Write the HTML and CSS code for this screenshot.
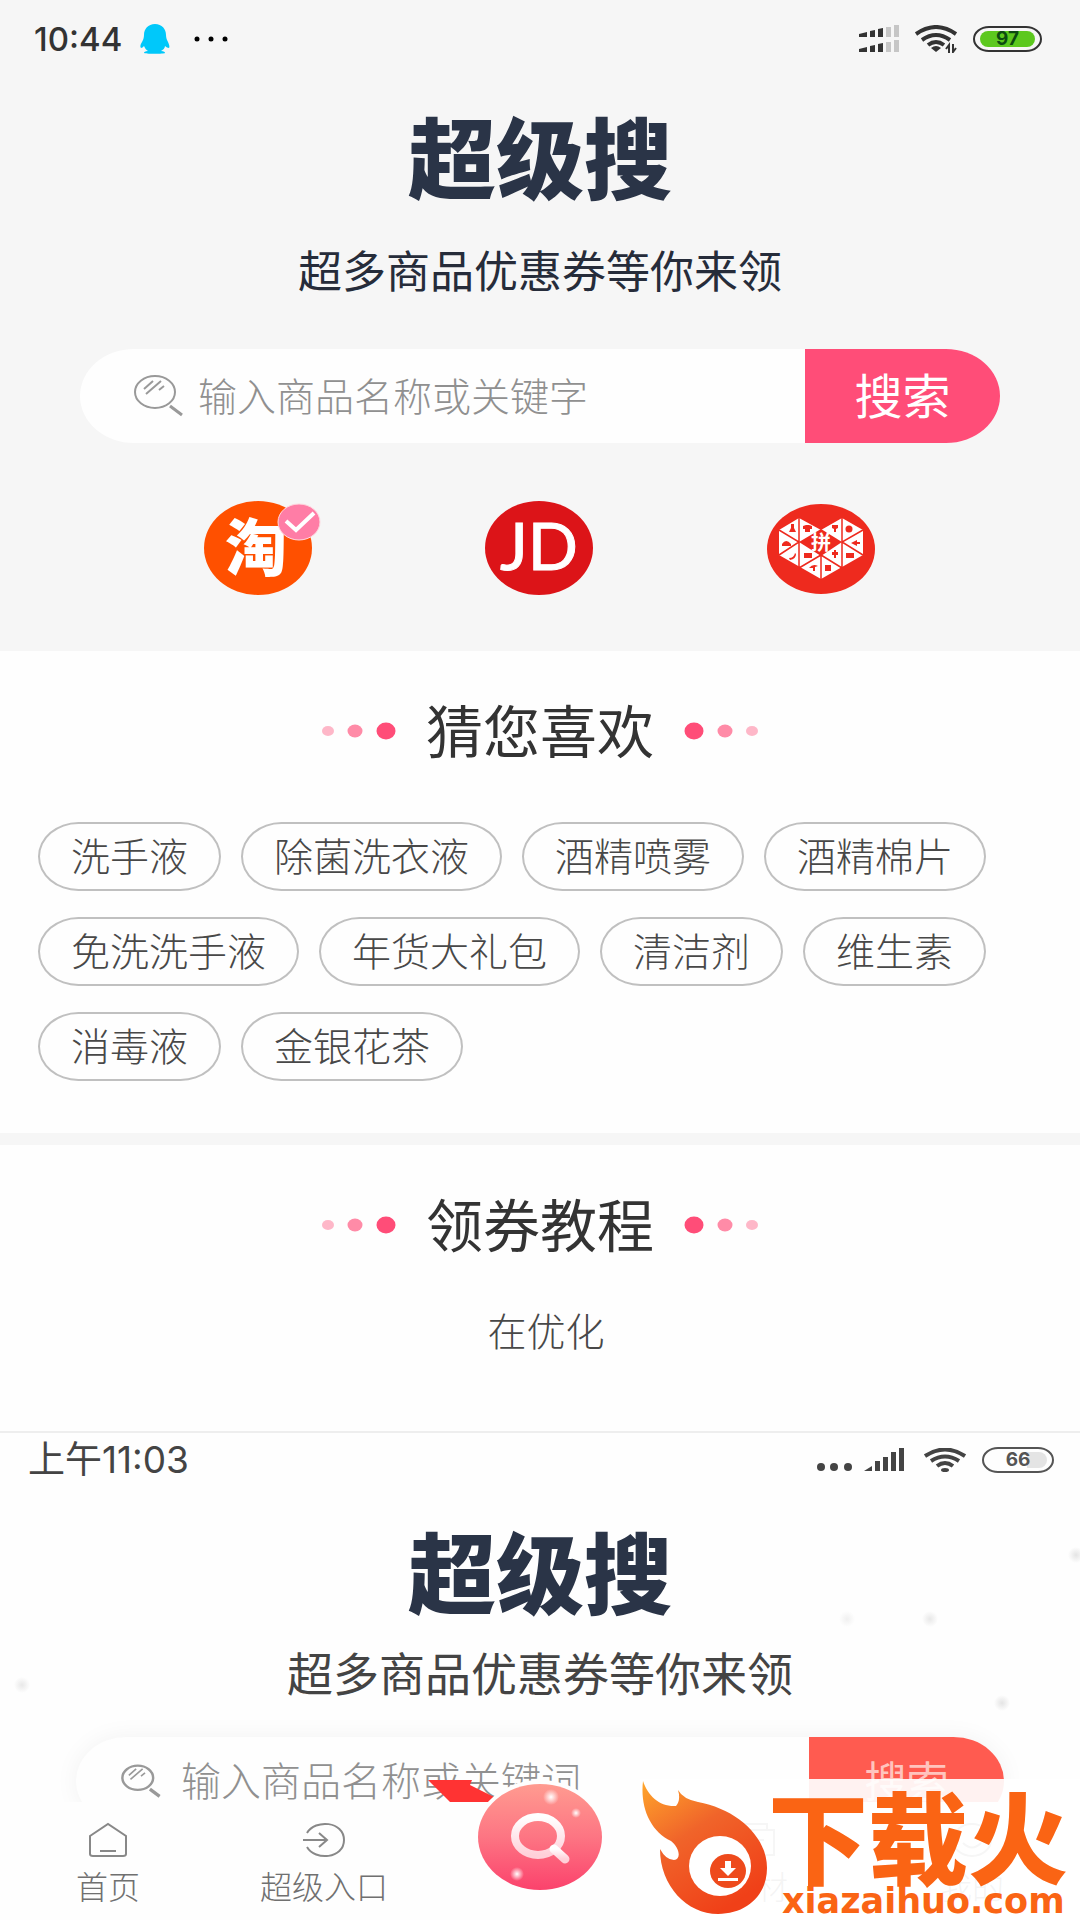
FILE: index.html
```html
<!DOCTYPE html>
<html lang="zh-CN">
<head>
  <meta charset="UTF-8">
  <meta name="viewport" content="width=device-width, initial-scale=1.0">
  <title>超级搜</title>
  <link rel="stylesheet" href="styles.css">
</head>
<body>
  <div class="app">
    <header class="top">
      <div class="status-bar">
        <span class="status-time">10:44</span>
        <svg class="icon-qq" width="30" height="30" viewBox="0 0 30 30" fill="#00c8fa">
          <path d="M15 0C8 0 4 5 4 11c0 3-1 5-2 7-2 3-2 5-1 6 1 0 2-1 3-2 1 2 2 4 4 5-3 0-4 1-4 2 0 1 21 1 21 0s-1-2-4-2c2-1 4-3 4-5 1 1 3 2 4 2 1-1 0-4-1-6-1-2-2-4-2-7C26 5 22 0 15 0z"/>
        </svg>
        <svg class="icon-more" width="34" height="6" viewBox="0 0 34 6">
          <circle cx="3" cy="3" r="2.5"/><circle cx="17" cy="3" r="2.5"/><circle cx="31" cy="3" r="2.5"/>
        </svg>
        <div class="status-right">
          <svg width="40" height="28" viewBox="0 0 40 28" fill="#333">
            <path d="M0 9l8-2v5H0zM11 6l5-1v7h-5zM19 4l5-1v9h-5zM0 24l8-2v5H0zM11 21l5-1v7h-5zM19 19l5-1v9h-5z"/>
            <path fill="#c6c6c6" d="M27 2h5v10h-5zM35 0h5v12h-5zM27 17h5v10h-5zM35 15h5v12h-5z"/>
          </svg>
          <svg width="42" height="28" viewBox="0 0 42 28" fill="none" stroke="#333" stroke-width="4">
            <path d="M1 9Q21-5 41 9M7 15q14-10 28 0M13 20q8-6 16 0"/>
            <path d="M21 27l-5-4q5-4 10 0z" fill="#333" stroke="none"/>
            <path d="M34 28v-8l-3 4M38 19v8l3-4" stroke-width="2"/>
          </svg>
          <span class="battery battery-green"><span class="battery-level">97</span></span>
        </div>
      </div>

      <h1 class="brand">超级搜</h1>
      <p class="slogan">超多商品优惠券等你来领</p>

      <form class="search">
        <label class="search-icon" for="keyword" aria-label="关键字">
          <svg width="50" height="42" viewBox="0 0 50 42" fill="none" stroke="#999" stroke-width="2">
            <ellipse cx="21" cy="17" rx="20" ry="16"/>
            <path d="M10 14l9-8M12 19l15-13M25 15l5-4"/>
            <path d="M36 31l12 9" stroke-width="3"/>
          </svg>
        </label>
        <input class="search-input" id="keyword" type="text" placeholder="输入商品名称或关键字">
        <button class="search-button" type="button">搜索</button>
      </form>

      <div class="sources">
        <button class="source" type="button" aria-label="淘宝">
          <svg width="109" height="94" viewBox="0 0 109 94">
            <ellipse cx="54" cy="47" rx="54" ry="47" fill="#ff5000"/>
            <text x="52" y="70" font-size="62" font-weight="900" fill="#fff" text-anchor="middle">淘</text>
          </svg>
          <svg class="source-check" width="44" height="38" viewBox="0 0 44 38">
            <ellipse cx="22" cy="19" rx="21" ry="18" fill="#ff7da6" stroke="#ffd9e0"/>
            <path d="M9 18l10 9 18-17" fill="none" stroke="#fff" stroke-width="4"/>
          </svg>
        </button>
        <button class="source" type="button" aria-label="京东">
          <svg width="109" height="94" viewBox="0 0 109 94">
            <ellipse cx="54" cy="47" rx="54" ry="47" fill="#dc1418"/>
            <text class="jd" x="54" y="69" font-size="66" fill="#fff" stroke="#fff" text-anchor="middle">JD</text>
          </svg>
        </button>
        <button class="source" type="button" aria-label="拼多多">
          <svg width="109" height="94" viewBox="0 0 109 94">
            <ellipse cx="54" cy="48" rx="54" ry="45" fill="#ee2a1e"/>
            <path fill="#fff" d="M12 29l20-12 22 12 21-12 21 12v25L54 78 12 54z"/>
            <g fill="none" stroke="#ee2a1e" stroke-width="1.5">
              <path d="M32 17v50M75 17v50M54 54v24M12 29l20 12-20 13M96 29L75 41l21 13M32 67l22-13 21 13"/>
            </g>
            <path fill="#ee2a1e" d="M32 41l22-13 21 13-21 14z"/>
            <g fill="#ee2a1e">
              <path d="M24 23h3v4l2 4h-7l2-4zM36 25l3-1h3l3 1v3h-2v3h-5v-3h-2zM65 24h6v3l-2 1v3h-2v-3l-2-1zM15 43q4-6 9 0v2h-9zM22 57q5 0 6-5l1 1q0 5-6 6zM37 52h8v5h-8zM65 51h2v-2h2v2h2v3h-2v3h-2v-3h-2zM79 52h8v5h-8zM84 42l6-3v2h3v2h-3v2zM42 67q4-5 9-2l-3 1v4h-2v-3zM58 64h6v6h-6z"/>
              <circle cx="82" cy="28" r="3.5"/>
            </g>
            <text x="54" y="49" font-size="20" font-weight="700" fill="#fff" text-anchor="middle">拼</text>
          </svg>
        </button>
      </div>
    </header>

    <section class="block">
      <div class="block-title">
        <svg width="74" height="20" viewBox="0 0 74 20" fill="#ff4d78">
          <ellipse cx="6" cy="11" rx="6" ry="5" opacity=".4"/><ellipse cx="33" cy="11" rx="7.5" ry="6.5" opacity=".65"/><ellipse cx="64" cy="11" rx="9.5" ry="8.5"/>
        </svg>
        <h2>猜您喜欢</h2>
        <svg width="74" height="20" viewBox="0 0 74 20" fill="#ff4d78">
          <ellipse cx="10" cy="11" rx="9.5" ry="8.5"/><ellipse cx="41" cy="11" rx="7.5" ry="6.5" opacity=".65"/><ellipse cx="68" cy="11" rx="6" ry="5" opacity=".4"/>
        </svg>
      </div>
      <div class="tags">
        <button class="tag" type="button">洗手液</button>
        <button class="tag" type="button">除菌洗衣液</button>
        <button class="tag" type="button">酒精喷雾</button>
        <button class="tag" type="button">酒精棉片</button>
        <button class="tag" type="button">免洗洗手液</button>
        <button class="tag" type="button">年货大礼包</button>
        <button class="tag" type="button">清洁剂</button>
        <button class="tag" type="button">维生素</button>
        <button class="tag" type="button">消毒液</button>
        <button class="tag" type="button">金银花茶</button>
      </div>
    </section>

    <section class="block block-guide">
      <div class="block-title">
        <svg width="74" height="20" viewBox="0 0 74 20" fill="#ff4d78">
          <ellipse cx="6" cy="11" rx="6" ry="5" opacity=".4"/><ellipse cx="33" cy="11" rx="7.5" ry="6.5" opacity=".65"/><ellipse cx="64" cy="11" rx="9.5" ry="8.5"/>
        </svg>
        <h2>领券教程</h2>
        <svg width="74" height="20" viewBox="0 0 74 20" fill="#ff4d78">
          <ellipse cx="10" cy="11" rx="9.5" ry="8.5"/><ellipse cx="41" cy="11" rx="7.5" ry="6.5" opacity=".65"/><ellipse cx="68" cy="11" rx="6" ry="5" opacity=".4"/>
        </svg>
      </div>
      <p class="guide-text">在优化</p>
    </section>

    <!-- tutorial shot -->
    <div class="shot">
      <div class="status-bar shot-status">
        <span class="shot-time">上午11:03</span>
        <div class="status-right">
          <svg width="92" height="24" viewBox="0 0 92 24" fill="#444">
            <circle cx="5" cy="19" r="4"/><circle cx="18" cy="19" r="4"/><circle cx="32" cy="19" r="4"/>
            <path d="M48 23l8-5v5zM59 13h5v10h-5zM67 9h5v14h-5zM75 4h5v19h-5zM83 0h5v23h-5z"/>
          </svg>
          <svg width="42" height="24" viewBox="0 0 42 24" fill="none" stroke="#444" stroke-width="4">
            <path d="M1 8Q21-5 41 8M7 13q14-9 28 0M13 18q8-6 16 0"/>
            <ellipse cx="21" cy="22" rx="4" ry="2" fill="#444" stroke="none"/>
          </svg>
          <span class="battery battery-gray"><span class="battery-level">66</span></span>
        </div>
      </div>
      <h2 class="brand">超级搜</h2>
      <p class="slogan">超多商品优惠券等你来领</p>
      <form class="search">
        <label class="search-icon" for="shot-keyword" aria-label="关键词">
          <svg width="42" height="34" viewBox="0 0 50 42" fill="none" stroke="#999" stroke-width="3">
            <ellipse cx="21" cy="17" rx="19" ry="15"/>
            <path d="M10 14l9-8M12 19l15-13M25 15l5-4" stroke-width="2"/>
            <path d="M36 31l12 9" stroke-width="4"/>
          </svg>
        </label>
        <input class="search-input" id="shot-keyword" type="text" placeholder="输入商品名称或关键词">
        <button class="search-button" type="button">搜索</button>
        <svg class="arrow" width="66" height="24" viewBox="0 0 66 24"><path d="M0 0h44l-2 5 24 12-5 7H24z" fill="#ff3333"/></svg>
      </form>
    </div>

    <nav class="tabs">
      <a class="tab" href="#">
        <svg width="42" height="36" viewBox="0 0 42 36" fill="none" stroke="#888" stroke-width="2">
          <path d="M3 14L21 2l18 12v18q0 2-3 2H6q-3 0-3-2zM13 29h16"/>
        </svg>
        <span>首页</span>
      </a>
      <a class="tab" href="#">
        <svg width="42" height="36" viewBox="0 0 42 36" fill="none" stroke="#888" stroke-width="2">
          <path d="M4 11C12-3 41-1 41 18S12 39 4 25M0 18h24M16 11l8 7-8 7"/>
        </svg>
        <span>超级入口</span>
      </a>
      <div class="tab">
        <a class="tab-main" href="#" aria-label="搜索">
          <svg width="124" height="106" viewBox="0 0 124 106">
            <defs>
              <linearGradient id="pink" x1="0" y1="0" x2="0" y2="1">
                <stop offset="0" stop-color="#ff9b90"/><stop offset=".5" stop-color="#fd7583"/><stop offset="1" stop-color="#fb426c"/>
              </linearGradient>
              <linearGradient id="lens" x1="0" y1="0" x2="0" y2="1">
                <stop offset="0" stop-color="#fff"/><stop offset="1" stop-color="#ffd0d9"/>
              </linearGradient>
              <radialGradient id="glow"><stop offset="0" stop-color="#fff"/><stop offset=".3" stop-color="#fff" stop-opacity=".7"/><stop offset="1" stop-color="#fff" stop-opacity="0"/></radialGradient>
            </defs>
            <ellipse cx="62" cy="53" rx="62" ry="53" fill="url(#pink)"/>
            <g fill="none" stroke="url(#lens)" stroke-width="8">
              <ellipse cx="60" cy="52" rx="23" ry="19"/>
              <path d="M76 65l11 10" stroke-width="9" stroke-linecap="round"/>
            </g>
            <circle cx="73" cy="13" r="8" fill="url(#glow)"/><circle cx="98" cy="29" r="5" fill="url(#glow)"/><circle cx="39" cy="90" r="7" fill="url(#glow)"/>
          </svg>
        </a>
      </div>
      <a class="tab" href="#">
        <svg width="42" height="36" viewBox="0 0 42 36" fill="none" stroke="#888" stroke-width="2">
          <path d="M3 8h36v25H3zM10 8V2h22v6M13 18h16"/>
        </svg>
        <span>素材</span>
      </a>
      <a class="tab" href="#">
        <svg width="42" height="36" viewBox="0 0 42 36" fill="none" stroke="#888" stroke-width="2">
          <ellipse cx="21" cy="18" rx="19" ry="16"/><path d="M12 21q9 9 18 0"/>
        </svg>
        <span>我的</span>
      </a>
    </nav>

    <div class="watermark">
      <svg width="128" height="140" viewBox="0 0 128 140">
        <defs>
          <linearGradient id="fire" x1="0" y1="0" x2=".6" y2="1">
            <stop offset="0" stop-color="#ffa62b"/><stop offset=".45" stop-color="#f0642a"/><stop offset="1" stop-color="#f04018"/>
          </linearGradient>
        </defs>
        <path fill="url(#fire)" d="M3 2C8 17 20 28 36 27q5-6 2-16 5 9 20 12c38 7 69 34 69 66 0 27-20 46-49 46C47 135 20 107 20 70q6 11 14 11c8-1 5-13-3-19C10 52 0 28 3 2z"/>
        <ellipse cx="80" cy="87" rx="31" ry="30" fill="#fff"/>
        <ellipse cx="88" cy="92" rx="18" ry="17" fill="#ee4a1c"/>
        <path fill="#fff" d="M85 82h6v7h5l-8 8-8-8h5zM78 99h20v3H78z"/>
      </svg>
      <div class="watermark-text">
        <strong>下载火</strong>
        <span>xiazaihuo.com</span>
      </div>
    </div>
  </div>
</body>
</html>
```
FILE: styles.css
```css
* {
  box-sizing: border-box;
}

body {
  margin: 0;
  background: #fefefe;
  color: #333;
  font-family: "Noto Sans CJK SC", sans-serif;
}

h1, h2, p {
  margin: 0;
  font-weight: 400;
}

button, input {
  font-family: inherit;
  border: none;
  padding: 0;
  background: none;
}

svg {
  display: block;
  flex: none;
}

.app {
  position: relative;
  display: flex;
  flex-direction: column;
  height: 100vh;
  overflow: hidden;
}

/* status bar */
.status-bar {
  display: flex;
  align-items: center;
  height: 30px;
  padding: 0 38px 0 34px;
}

.status-time {
  font-family: Inter, sans-serif;
  font-size: 33px;
  font-weight: 500;
  line-height: 30px;
}

.icon-qq {
  margin-left: 18px;
}

.icon-more {
  margin-left: 24px;
}

.status-right {
  display: flex;
  align-items: center;
  gap: 16px;
  margin-left: auto;
}

.battery {
  display: flex;
  width: 69px;
  height: 26px;
  padding: 3px 5px;
  border: 2px solid #333;
  border-radius: 16px / 13px;
  font-family: Inter, sans-serif;
  font-size: 19px;
  font-weight: 700;
}

.battery-level {
  flex: 1;
  border-radius: 8px;
  line-height: 16px;
  text-align: center;
}

.battery-green .battery-level {
  background: #5cc81e;
  color: #0c4a10;
}

.battery-gray {
  width: 72px;
  border-color: #555;
  color: #555;
}

.battery-gray .battery-level {
  background: linear-gradient(90deg, transparent 66%, #e4e4e4 66%);
}

/* header */
.top {
  padding: 24px 0 56px;
  background: #f6f6f6;
}

.brand {
  margin-top: 50px;
  color: #2a3447;
  font-size: 88px;
  font-weight: 900;
  line-height: 100px;
  text-align: center;
}

.slogan {
  margin-top: 40px;
  color: #262c3a;
  font-size: 44px;
  line-height: 50px;
  text-align: center;
}

.search {
  position: relative;
  display: flex;
  height: 94px;
  margin: 55px 80px 0;
  padding-left: 54px;
  border-radius: 54px / 47px;
  background: #fefefe;
}

.search-icon {
  align-self: center;
}

.search-input {
  flex: 1;
  min-width: 0;
  padding: 0 0 4px 14px;
  outline: none;
  font-size: 39px;
  font-weight: 300;
}

.search-input::placeholder {
  color: #909090;
  opacity: 1;
}

.search-button {
  width: 195px;
  padding-bottom: 6px;
  border-radius: 0 54px 54px 0 / 0 47px 47px 0;
  background: #ff4d78;
  color: #fff;
  font-size: 48px;
}

.sources {
  display: grid;
  grid-template-columns: repeat(3, 1fr);
  justify-items: center;
  margin-top: 58px;
  padding: 0 118px;
}

.source {
  position: relative;
}

.source text {
  font-family: "Noto Sans CJK SC", sans-serif;
}

.source .jd {
  font-family: Lato, sans-serif;
}

.source-check {
  position: absolute;
  top: 2px;
  right: -8px;
}

/* sections */
.block {
  padding: 49px 38px 52px;
}

.block-title {
  display: flex;
  align-items: center;
  justify-content: center;
  gap: 30px;
}

.block-title h2 {
  padding-bottom: 3px;
  font-size: 57px;
  line-height: 57px;
}

.tags {
  display: flex;
  flex-wrap: wrap;
  gap: 26px 20px;
  margin-top: 62px;
}

.tag {
  padding: 0 31px 4px;
  border: 2px solid #c0c0c0;
  border-radius: 41px / 35px;
  color: #484848;
  font-size: 39px;
  font-weight: 300;
  line-height: 61px;
}

.block-guide {
  padding-bottom: 77px;
  border-top: 12px solid #f6f6f6;
}

.guide-text {
  margin-top: 50px;
  padding-left: 12px;
  color: #484848;
  font-size: 39px;
  font-weight: 300;
  line-height: 50px;
  text-align: center;
}

/* tutorial shot */
.shot {
  flex: 1;
  min-height: 0;
  overflow: hidden;
  padding-top: 12px;
  border-top: 2px solid #eee;
  background:
    radial-gradient(circle at 22px 252px, #e8e8e8, transparent 8px),
    radial-gradient(circle at 1076px 122px, #e4e4e4, transparent 8px),
    radial-gradient(circle at 930px 186px, #e8e8e8, transparent 8px),
    radial-gradient(circle at 847px 186px, #f0f0f0, transparent 8px),
    radial-gradient(circle at 1002px 270px, #e4e4e4, transparent 8px);
}

.shot-status {
  padding: 0 26px 0 28px;
}

.shot-time {
  color: #444;
  font-family: Inter, "Noto Sans CJK SC", sans-serif;
  font-size: 37px;
  line-height: 30px;
}

.shot .brand {
  margin-top: 44px;
}

.shot .slogan {
  margin-top: 27px;
  color: #444;
  font-size: 46px;
}

.shot .search {
  margin: 41px 76px 0;
  padding-left: 44px;
  height: 88px;
  box-shadow: 0 0 24px rgba(0, 0, 0, 0.05);
}

.shot .search-input {
  padding-left: 19px;
  font-size: 40px;
}

.shot .search-button {
  background: #ff5b50;
  color: #ffc4be;
  font-size: 42px;
}

.arrow {
  position: absolute;
  top: 43px;
  left: 352px;
}

/* bottom tabs */
.tabs {
  display: grid;
  grid-template-columns: repeat(5, 1fr);
  height: 118px;
  flex: none;
  background: #fefefe;
}

.tab {
  position: relative;
  display: flex;
  flex-direction: column;
  align-items: center;
  gap: 2px;
  padding-top: 20px;
  color: #707070;
  font-size: 32px;
  font-weight: 300;
  line-height: 50px;
  text-decoration: none;
}

.tab-main {
  position: absolute;
  top: -22px;
  border: 4px solid #fefefe;
  border-radius: 50%;
  background: #fefefe;
}

/* site mark over the corner */
.watermark {
  position: absolute;
  right: 0;
  bottom: 0;
  display: flex;
  width: 440px;
  height: 141px;
  background: rgba(255, 255, 255, 0.92);
}

.watermark-text {
  display: flex;
  flex-direction: column;
  color: #fa6414;
}

.watermark strong {
  font-size: 100px;
  font-weight: 900;
  line-height: 110px;
}

.watermark span {
  padding-left: 14px;
  font-family: "DejaVu Sans", sans-serif;
  font-size: 35px;
  font-weight: 700;
  line-height: 24px;
}
```
